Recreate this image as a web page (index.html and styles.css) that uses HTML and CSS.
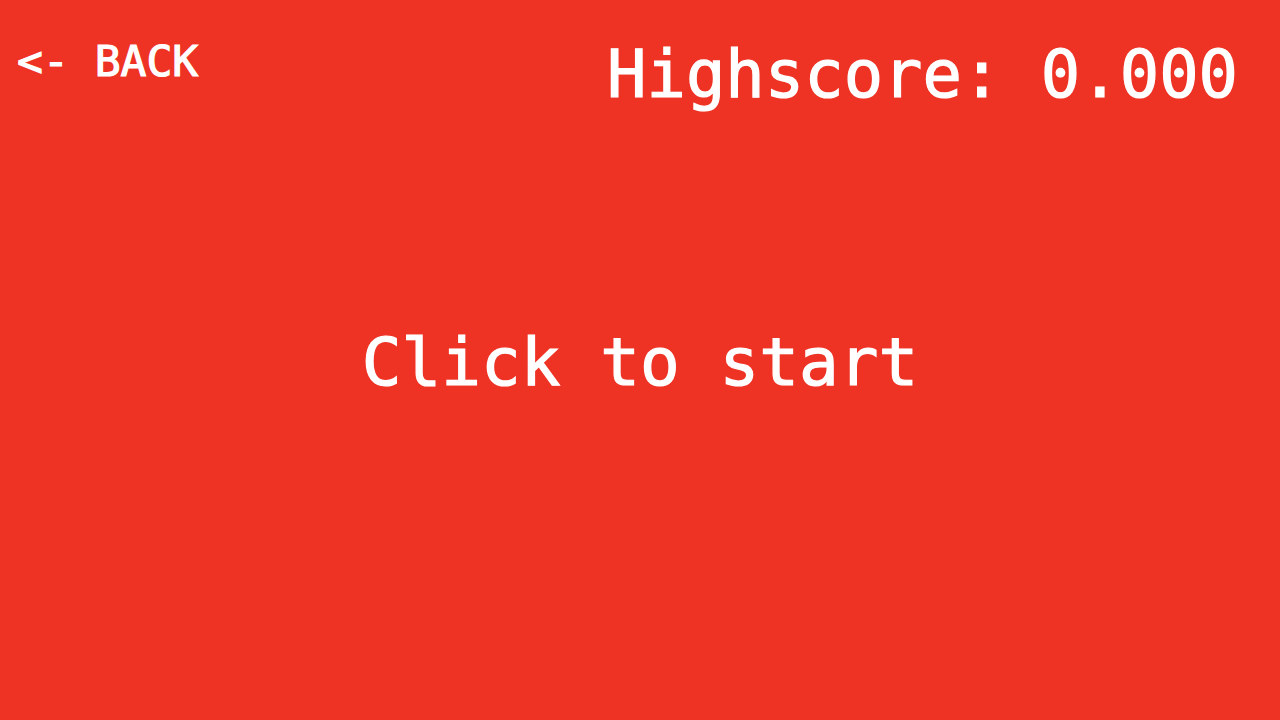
FILE: index.html
```html
<!DOCTYPE html>
<html>
<head>
<meta charset="utf-8">
<link rel="stylesheet" href="styles.css">
</head>
<body>
<div class="screen">
  <div class="top">
    <a class="back">&lt;- BACK</a>
    <div class="score">Highscore: 0.000</div>
  </div>
  <div class="center">Click to start</div>
</div>
</body>
</html>
```
FILE: styles.css
```css
html, body {
  margin: 0;
  padding: 0;
  background: #ee3224;
}
.screen {
  width: 1280px;
  height: 720px;
  display: grid;
  grid-template: 1fr / 1fr;
  color: #ffffff;
  font-family: "DejaVu Sans Mono", "Liberation Mono", monospace;
  -webkit-text-stroke: 1.2px #ffffff;
  overflow: hidden;
}
.top {
  grid-area: 1 / 1;
  align-self: start;
  display: flex;
  justify-content: space-between;
  align-items: flex-start;
  padding: 30px 42px 0 17px;
}
.back {
  font-size: 43px;
  line-height: 1;
  margin-top: 10px;
}
.score {
  font-size: 65.5px;
  line-height: 1;
  margin-top: 12px;
}
.center {
  grid-area: 1 / 1;
  place-self: center;
  font-size: 66px;
  line-height: 1;
  padding-top: 6px;
}
```
